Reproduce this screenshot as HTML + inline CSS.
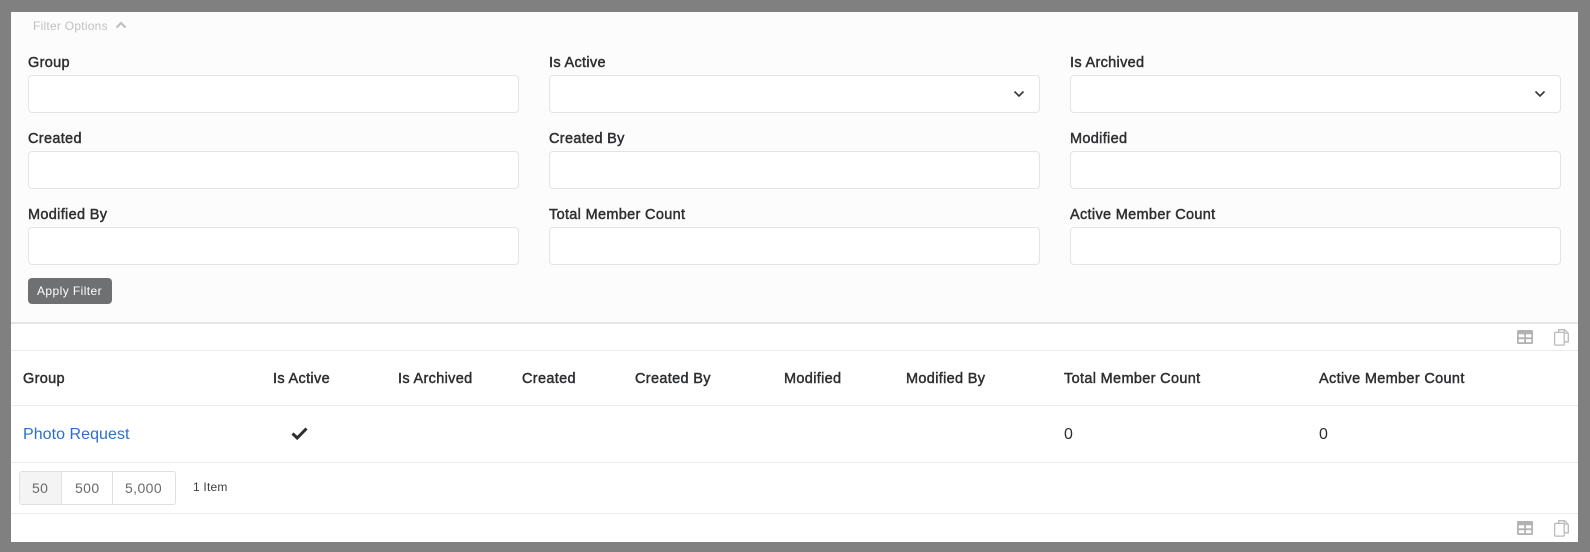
<!DOCTYPE html>
<html><head><meta charset="utf-8"><style>
html,body{margin:0;padding:0;width:1590px;height:552px;overflow:hidden;background:#808080;font-family:"Liberation Sans","DejaVu Sans",sans-serif}
#f{position:absolute;left:11px;top:12px;width:1567px;height:530px;background:#fff;overflow:hidden}
#p{position:absolute;left:11px;top:12px;width:1567px;height:310px;background:#fcfcfc;border-bottom:2px solid #e6e6e6}
.t{position:absolute;white-space:nowrap}
.l{font-size:14.500px;line-height:18px;color:#2d2e30;letter-spacing:.32px;-webkit-text-stroke:.45px #2d2e30}
.h{font-size:14.500px;line-height:18px;color:#2d2e30;letter-spacing:.33px;-webkit-text-stroke:.45px #2d2e30;top:370px}
.i{position:absolute;width:489px;height:36px;background:#fff;border:1px solid #e4e4e4;border-radius:4px}
.r{position:absolute;left:11px;width:1567px;height:1px;background:#ebebeb}
svg{position:absolute;overflow:visible}
.d{font-size:16px;line-height:20px;color:#2d2e30}
</style></head><body>
<div id="f"></div><div id="p"></div>

<span class="t" style="left:33px;top:18px;font-size:12px;line-height:16px;color:#c0c0c0;letter-spacing:.25px">Filter Options</span>
<svg style="left:115px;top:20px" width="12" height="10" viewBox="0 0 12 10"><path d="M1.500 7.500L6 3l4.500 4.500" fill="none" stroke="#c0c0c0" stroke-width="2.200"/></svg>

<span class="t l" style="left:28px;top:54px">Group</span>
<span class="t l" style="left:549px;top:54px">Is Active</span>
<span class="t l" style="left:1070px;top:54px">Is Archived</span>
<div class="i" style="left:28px;top:75px"></div>
<div class="i" style="left:549px;top:75px"></div>
<div class="i" style="left:1070px;top:75px"></div>
<svg style="left:1012px;top:89px" width="14" height="10" viewBox="0 0 14 10"><path d="M2.500 2.500l4.500 4.500 4.500-4.500" fill="none" stroke="#33353a" stroke-width="1.600"/></svg>
<svg style="left:1533px;top:89px" width="14" height="10" viewBox="0 0 14 10"><path d="M2.500 2.500l4.500 4.500 4.500-4.500" fill="none" stroke="#33353a" stroke-width="1.600"/></svg>

<span class="t l" style="left:28px;top:130px">Created</span>
<span class="t l" style="left:549px;top:130px">Created By</span>
<span class="t l" style="left:1070px;top:130px">Modified</span>
<div class="i" style="left:28px;top:151px"></div>
<div class="i" style="left:549px;top:151px"></div>
<div class="i" style="left:1070px;top:151px"></div>

<span class="t l" style="left:28px;top:206px">Modified By</span>
<span class="t l" style="left:549px;top:206px">Total Member Count</span>
<span class="t l" style="left:1070px;top:206px">Active Member Count</span>
<div class="i" style="left:28px;top:227px"></div>
<div class="i" style="left:549px;top:227px"></div>
<div class="i" style="left:1070px;top:227px"></div>

<div style="position:absolute;left:28px;top:278px;width:84px;height:26px;background:#6f7072;border-radius:4px"></div>
<span class="t" style="left:37px;top:283px;font-size:12px;line-height:16px;color:#fff;letter-spacing:.42px">Apply Filter</span>

<svg style="left:1517px;top:330px" width="16" height="14" viewBox="0 0 16 14"><rect x="0" y="0" width="16" height="14" rx="1.500" fill="#b2b2b2"/><rect x="1.700" y="4.300" width="5.500" height="3" fill="#fff"/><rect x="9" y="4.300" width="5.300" height="3" fill="#fff"/><rect x="1.700" y="9.200" width="5.500" height="3" fill="#fff"/><rect x="9" y="9.200" width="5.300" height="3" fill="#fff"/></svg>
<svg style="left:1554px;top:329px" width="15" height="17" viewBox="0 0 15 17"><path d="M4.700 3V.7h5.800l3.800 3.800v8.300H10.800" fill="none" stroke="#bababa" stroke-width="1.300"/><path d="M9.800 .5h1v3.200h3.500v1H9.800z" fill="#bababa"/><path d="M1.500 3.400H9.300a.9 .9 0 0 1 .9 .9V15.200a.9 .9 0 0 1-.9 .9H1.500a.9 .9 0 0 1-.9-.9V4.300a.9 .9 0 0 1 .9-.9z" fill="none" stroke="#bababa" stroke-width="1.300"/></svg>

<div class="r" style="top:350px"></div>
<span class="t h" style="left:23px">Group</span>
<span class="t h" style="left:273px">Is Active</span>
<span class="t h" style="left:398px">Is Archived</span>
<span class="t h" style="left:522px">Created</span>
<span class="t h" style="left:635px">Created By</span>
<span class="t h" style="left:784px">Modified</span>
<span class="t h" style="left:906px">Modified By</span>
<span class="t h" style="left:1064px">Total Member Count</span>
<span class="t h" style="left:1319px">Active Member Count</span>
<div class="r" style="top:405px"></div>

<span class="t d" style="left:23px;top:425px;color:#2a6fd0;letter-spacing:.05px">Photo Request</span>
<svg style="left:291px;top:426px" width="17" height="14" viewBox="0 0 17 14"><path d="M1.500 7.500l4.700 4.500L15.500 2.500" fill="none" stroke="#2d2e30" stroke-width="3"/></svg>
<span class="t d" style="left:1064px;top:425px">0</span>
<span class="t d" style="left:1319px;top:425px">0</span>
<div class="r" style="top:462px"></div>

<div style="position:absolute;left:19px;top:471px;width:155px;height:32px;border:1px solid #e0e0e0;border-radius:3px;background:#fff"></div>
<div style="position:absolute;left:20px;top:472px;width:41px;height:32px;background:#f4f4f4;border-right:1px solid #e0e0e0"></div>
<div style="position:absolute;left:112px;top:472px;width:1px;height:32px;background:#e0e0e0"></div>
<span class="t" style="left:32px;top:479px;font-size:14px;line-height:18px;color:#6a6a6a;letter-spacing:.4px">50</span>
<span class="t" style="left:75px;top:479px;font-size:14px;line-height:18px;color:#6a6a6a;letter-spacing:.4px">500</span>
<span class="t" style="left:125px;top:479px;font-size:14px;line-height:18px;color:#6a6a6a;letter-spacing:.4px">5,000</span>
<span class="t" style="left:193px;top:479px;font-size:12px;line-height:16px;color:#3d3d3d;letter-spacing:.2px">1 Item</span>
<div class="r" style="top:513px"></div>

<svg style="left:1517px;top:521px" width="16" height="14" viewBox="0 0 16 14"><rect x="0" y="0" width="16" height="14" rx="1.500" fill="#b2b2b2"/><rect x="1.700" y="4.300" width="5.500" height="3" fill="#fff"/><rect x="9" y="4.300" width="5.300" height="3" fill="#fff"/><rect x="1.700" y="9.200" width="5.500" height="3" fill="#fff"/><rect x="9" y="9.200" width="5.300" height="3" fill="#fff"/></svg>
<svg style="left:1554px;top:520px" width="15" height="17" viewBox="0 0 15 17"><path d="M4.700 3V.7h5.800l3.800 3.800v8.300H10.800" fill="none" stroke="#bababa" stroke-width="1.300"/><path d="M9.800 .5h1v3.200h3.500v1H9.800z" fill="#bababa"/><path d="M1.500 3.400H9.300a.9 .9 0 0 1 .9 .9V15.200a.9 .9 0 0 1-.9 .9H1.500a.9 .9 0 0 1-.9-.9V4.300a.9 .9 0 0 1 .9-.9z" fill="none" stroke="#bababa" stroke-width="1.300"/></svg>
</body></html>
